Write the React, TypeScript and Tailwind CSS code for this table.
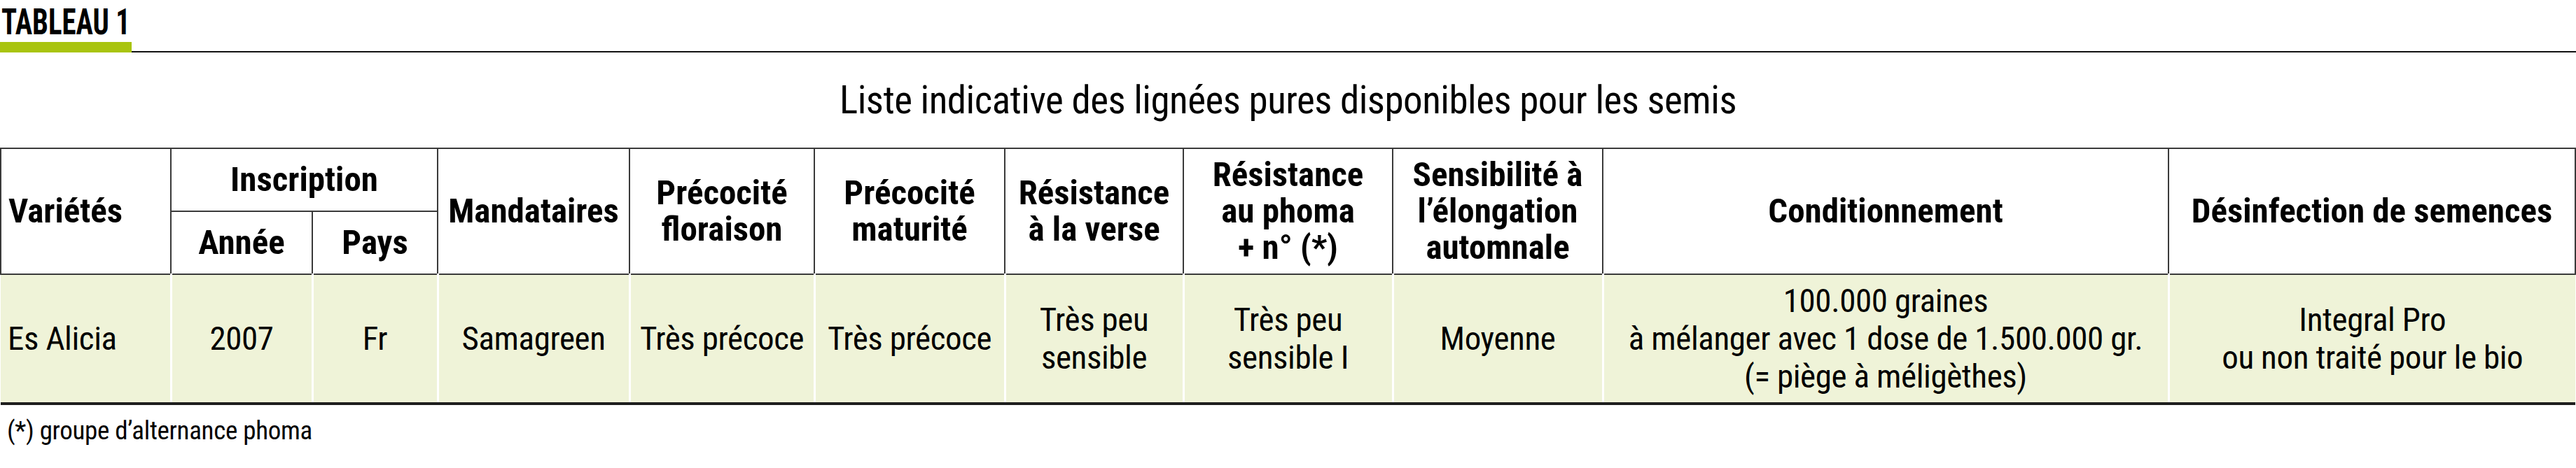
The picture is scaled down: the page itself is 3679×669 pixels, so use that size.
import React from 'react';

const font = "font-['Roboto_Condensed','Liberation_Sans_Narrow','DejaVu_Sans_Condensed',Roboto,sans-serif] font-stretch-condensed";

const th = 'border-2 border-[#3a3a3a] font-bold text-[49px] leading-[52px] text-black align-middle text-center px-1';
const td = 'border-x-[3px] border-x-white border-b-4 border-b-[#1e1e1e] text-[47px] leading-[54px] tracking-[-0.4px] text-black align-middle text-center px-1';

const App = () => {
  return (
    <div className={`w-[3679px] h-[669px] bg-white overflow-hidden ${font}`}>
      <div className="pt-[4px]">
        <div className="h-[56px] pl-[2px]">
          <span className="inline-block origin-left scale-x-[0.8] font-bold text-[51px] leading-[56px]">TABLEAU 1</span>
        </div>
        <div className="flex items-end">
          <div className="w-[188px] h-[15px] bg-[#a9c40f]" />
          <div className="flex-1 h-[2px] bg-[#111]" />
        </div>
      </div>

      <div className="h-[136px] flex items-center justify-center text-[55px] leading-[60px] tracking-[-0.5px] text-black">
        Liste indicative des lignées pures disponibles pour les semis
      </div>

      <table className="w-[3677px] table-fixed border-collapse">
        <colgroup>
          <col className="w-[243px]" />
          <col className="w-[202px]" />
          <col className="w-[179px]" />
          <col className="w-[274px]" />
          <col className="w-[264px]" />
          <col className="w-[272px]" />
          <col className="w-[255px]" />
          <col className="w-[299px]" />
          <col className="w-[300px]" />
          <col className="w-[808px]" />
          <col className="w-[581px]" />
        </colgroup>
        <thead>
          <tr className="h-[90px]">
            <th rowSpan={2} className={`${th} text-left pl-[10px]`}>Variétés</th>
            <th colSpan={2} className={th}>Inscription</th>
            <th rowSpan={2} className={th}>Mandataires</th>
            <th rowSpan={2} className={th}>Précocité<br />floraison</th>
            <th rowSpan={2} className={th}>Précocité<br />maturité</th>
            <th rowSpan={2} className={th}>Résistance<br />à la verse</th>
            <th rowSpan={2} className={th}>Résistance<br />au phoma<br />+ n° (*)</th>
            <th rowSpan={2} className={th}>Sensibilité à<br />l’élongation<br />automnale</th>
            <th rowSpan={2} className={th}>Conditionnement</th>
            <th rowSpan={2} className={th}>Désinfection de semences</th>
          </tr>
          <tr className="h-[90px]">
            <th className={th}>Année</th>
            <th className={th}>Pays</th>
          </tr>
        </thead>
        <tbody>
          <tr className="h-[185px] bg-[#eff3d8]">
            <td className={`${td} text-left pl-[10px] border-l-0`}>Es Alicia</td>
            <td className={td}>2007</td>
            <td className={td}>Fr</td>
            <td className={td}>Samagreen</td>
            <td className={`${td} whitespace-nowrap`}>Très précoce</td>
            <td className={`${td} whitespace-nowrap`}>Très précoce</td>
            <td className={td}>Très peu<br />sensible</td>
            <td className={td}>Très peu<br />sensible I</td>
            <td className={td}>Moyenne</td>
            <td className={`${td} whitespace-nowrap`}>
              100.000 graines<br />à mélanger avec 1 dose de 1.500.000 gr.<br />(= piège à méligèthes)
            </td>
            <td className={`${td} border-r-0`}>Integral Pro<br />ou non traité pour le bio</td>
          </tr>
        </tbody>
      </table>

      <div className="pl-[10px] pt-[16px] text-[37px] leading-[42px] tracking-[-0.3px] text-black">(*) groupe d’alternance phoma</div>
    </div>
  );
};

export default App;
